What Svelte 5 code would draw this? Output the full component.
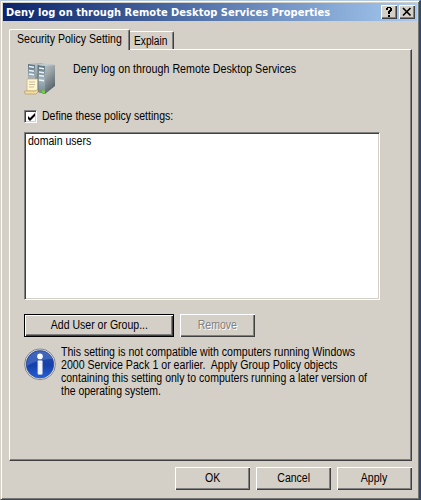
<script>
  const note = [
    { text: 'This setting is not compatible with computers running Windows', k: 0.88 },
    { text: '2000 Service Pack 1 or earlier.\u00a0 Apply Group Policy objects', k: 0.884 },
    { text: 'containing this setting only to computers running a later version of', k: 0.877 },
    { text: 'the operating system.', k: 0.87 }
  ];
  let defined = $state(true);
</script>

<main class="window">
  <header class="titlebar">
    <h1>Deny log on through Remote Desktop Services Properties</h1>
    <button class="cap" aria-label="Help">
      <svg width="14" height="12" viewBox="0 0 14 12"><path d="M4 3V2H5V1H9V2H10V5H9V6H8V8H6V5H7V4H8V2H6V4H4ZM6 9H8V11H6Z" fill="#000" /></svg>
    </button>
    <button class="cap close" aria-label="Close">
      <svg width="14" height="12" viewBox="0 0 14 12"><path d="M3 2L10.5 9.5M10.5 2L3 9.5" stroke="#000" stroke-width="1.7" /></svg>
    </button>
  </header>

  <nav class="tabs">
    <div class="tab active"><span>Security Policy Setting</span></div>
    <div class="tab second"><span>Explain</span></div>
  </nav>

  <section class="panel">
    <div class="heading">
      <svg class="server" width="32" height="34" viewBox="0 0 32 34">
        <defs>
          <linearGradient id="side" x1="0" y1="0" x2=".6" y2="1"><stop offset="0" stop-color="#ced4d6" /><stop offset=".5" stop-color="#9ba5a8" /><stop offset="1" stop-color="#56636a" /></linearGradient>
          <linearGradient id="face" x1="0" y1="0" x2="0" y2="1"><stop offset="0" stop-color="#5a7180" /><stop offset=".5" stop-color="#a3b4bd" /><stop offset="1" stop-color="#75868e" /></linearGradient>
        </defs>
        <path d="M4 1L7 0H18L20 1V25L11 28L4 26Z" fill="url(#side)" />
        <path d="M4 1L11 2V28L4 26Z" fill="url(#face)" />
        <path d="M5 3.5L10 4.2M5 7.5L10 8.2M5 11L10 11.7" stroke="#eef3f5" stroke-width="1.5" />
        <path d="M14 2L19 .5L31 2V23L21 31L14 29Z" fill="url(#side)" />
        <path d="M14 2L21 3V31L14 29Z" fill="url(#face)" />
        <path d="M15 5L20 5.7M15 9L20 9.7M15 12.5L20 13.2M15 17L20 17.7" stroke="#eef3f5" stroke-width="1.5" />
        <path d="M14 2V29" stroke="#566770" stroke-width=".7" />
        <path d="M14 2L19 .5L31 2L21 3Z" fill="#c1cacd" />
        <path d="M18 27L21 28V30.5L18 29.5Z" fill="#67dc22" />
        <path d="M3 16H13.5V28H3Z" fill="#fff5ce" stroke="#c9ad72" stroke-width=".7" />
        <path d="M5 19H11M5 21.5H11M5 24H10" stroke="#c5b896" stroke-width=".9" />
        <path d="M.5 28H11L14 26.5V29L12 31H1Z" fill="#f1dda0" stroke="#b99c5a" stroke-width=".7" />
      </svg>
      <span>Deny log on through Remote Desktop Services</span>
    </div>

    <label class="check">
      <input type="checkbox" bind:checked={defined} />
      <i>{#if defined}<svg width="9" height="9" viewBox="0 0 9 9"><path d="M1 3L3 5L8 0V3L3 8L1 6Z" fill="#000" /></svg>{/if}</i>
      <span>Define these policy settings:</span>
    </label>

    <div class="list"><span>domain users</span></div>

    <div class="actions">
      <button class="btn add"><span>Add User or Group...</span></button>
      <button class="btn" disabled><span>Remove</span></button>
    </div>

    <div class="note">
      <svg width="32" height="33" viewBox="0 0 32 33">
        <defs><linearGradient id="blue" x1="0" y1="0" x2="0" y2="1"><stop offset="0" stop-color="#244daa" /><stop offset=".55" stop-color="#1540ad" /><stop offset="1" stop-color="#2460d6" /></linearGradient></defs>
        <circle cx="16" cy="16.3" r="15.4" fill="#e4e5e7" stroke="#777c88" stroke-width=".9" />
        <circle cx="16" cy="16.3" r="13.8" fill="url(#blue)" stroke="#344a83" stroke-width=".7" />
        <path d="M3 18C2 9 9 3.3 16 3.3S27 7 28.4 11C21 11 10 13 3 18Z" fill="#799bdd" opacity=".35" />
        <circle cx="16" cy="8.4" r="2.8" fill="#fff" />
        <rect x="13.8" y="12.5" width="4.6" height="14" rx=".8" fill="#f4f4f4" stroke="#b8c0d0" stroke-width=".5" />
      </svg>
      <div class="lines">
        {#each note as line}
          <p><span style="--k: {line.k}">{line.text}</span></p>
        {/each}
      </div>
    </div>
  </section>

  <footer>
    <button class="btn"><span>OK</span></button>
    <button class="btn"><span>Cancel</span></button>
    <button class="btn"><span>Apply</span></button>
  </footer>
</main>

<style>
  :global(body) { margin: 0; background: #314969; }
  * { box-sizing: border-box; }
  .window {
    width: 421px; height: 500px; padding: 1px 1px 0 1px; display: flex; flex-direction: column;
    background: #d4d0c8; font: 12px/13px "Liberation Sans", Arial, sans-serif; color: #000;
    border: solid; border-width: 1px 2px 1px 1px; border-color: #b4cbe4 #2f4a6c #2f4a6c #d4d0c8;
    box-shadow: inset 1px 1px #fff, inset -1px -1px #77756f; white-space: nowrap; overflow: hidden;
  }
  /* Condensed dialog lettering */
  span { --k: .878; display: inline-block; transform: scaleX(var(--k)); transform-origin: 0 0; }
  .titlebar { height: 18px; margin: 1px 1px 0; flex: none; display: flex; align-items: center; padding: 0 2px 0 3px; background: linear-gradient(90deg, #0a246a, #a6caf0); }
  h1 { margin: 0; flex: 1; color: #fff; font: bold 11px/17px "DejaVu Sans Condensed", "DejaVu Sans", sans-serif; font-stretch: condensed; letter-spacing: .03px; }
  button { padding: 0; margin: 0; border: 0; border-radius: 0; background: #d4d0c8; color: #000; font: inherit; }
  .cap, .btn { box-shadow: inset 1px 1px #fff, inset -1px -1px #404040, inset -2px -2px #808080; }
  .cap { width: 16px; height: 14px; padding: 1px; }
  .cap svg { display: block; }
  .close { margin-left: 2px; }
  .tabs { display: flex; align-items: flex-end; height: 20px; margin: 8px 0 0 7px; flex: none; }
  .tab { height: 18px; width: 44px; padding: 3px 0 0 4px; border-top: 1px solid #fff; border-right: 1px solid #404040; box-shadow: inset -1px 0 #808080; border-radius: 0 2px 0 0; }
  .second span { --k: .85; }
  .tab.active { position: relative; height: 21px; width: 121px; margin-bottom: -1px; padding: 3px 0 0 7px; border-left: 1px solid #fff; background: #d4d0c8; border-radius: 2px 2px 0 0; }
  .panel { margin-left: 7px; width: 403px; height: 412px; flex: none; padding: 13px 14px 0 14px; border: 1px solid; border-color: #fff #404040 #404040 #fff; box-shadow: inset -1px -1px #808080; }
  .heading { display: flex; height: 34px; gap: 17px; }
  .heading span { --k: .892; }
  .server { display: block; }
  .check { display: flex; align-items: center; height: 14px; margin-top: 12px; gap: 5px; }
  .check input { position: absolute; opacity: 0; width: 1px; height: 1px; margin: 0; }
  .check i { width: 13px; height: 13px; padding: 2px; background: #fff; border: solid 1px; border-color: #808080 #fff #fff #808080; box-shadow: inset 1px 1px #404040, inset -1px -1px #d4d0c8; }
  .check svg { display: block; }
  .list { width: 356px; height: 168px; margin-top: 9px; padding: 2px 3px; background: #fff; border: 1px solid; border-color: #808080 #fff #fff #808080; box-shadow: inset 1px 1px #404040, inset -1px -1px #d4d0c8; }
  .actions { display: flex; gap: 6px; margin-top: 14px; }
  .btn { width: 75px; height: 23px; display: flex; align-items: center; justify-content: center; }
  .btn span { transform-origin: 50% 0; }
  .add { width: 150px; border: 1px solid #000; }
  .btn:disabled { color: #808080; text-shadow: 1px 1px #fff; }
  .note { display: flex; gap: 5px; margin-top: 9px; }
  .note svg { display: block; flex: none; margin-top: 2px; }
  .lines { width: 330px; }
  p { margin: 0; height: 13px; }
  footer { display: flex; gap: 6px; justify-content: flex-end; margin: 6px 6px 0 0; }
</style>
